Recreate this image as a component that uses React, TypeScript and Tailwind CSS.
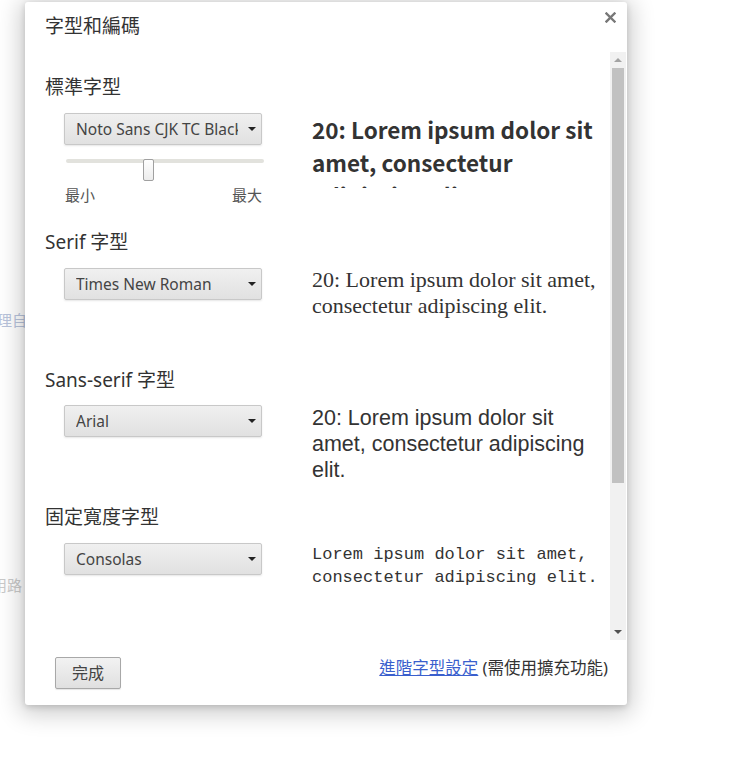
import React from "react";

const Select = ({ value }: { value: string }) => (
  <div className="flex h-[32px] w-[198px] items-center rounded-[2px] border border-[#c8c8c8] bg-gradient-to-b from-[#f0f0f0] to-[#e1e1e1] pl-[11px] pr-[5px] shadow-[0_1px_2px_rgba(0,0,0,0.1)]">
    <span className="flex-1 overflow-hidden whitespace-nowrap text-[15.5px] leading-[20px] text-[#444]">{value}</span>
    <span className="ml-[10px] h-0 w-0 border-x-[4px] border-t-[4px] border-x-transparent border-t-[#222]" />
  </div>
);

const Heading = ({ children, className = "" }: { children: React.ReactNode; className?: string }) => (
  <div className={`h-[24px] text-[19px] leading-[24px] text-[#333] ${className}`}>{children}</div>
);

const App = () => {
  return (
    <div className="relative h-[779px] w-[749px] overflow-hidden bg-white font-['Noto_Sans','Noto_Sans_CJK_TC',sans-serif]">
      {/* page behind the overlay */}
      <div className="flex flex-col pl-0 pt-[309px]">
        <span className="ml-[-3px] text-[15px] leading-[22px] text-[#b9c4dc]">理自</span>
        <span className="ml-[-8px] mt-[243px] text-[15px] leading-[22px] text-[#cacaca]">用路</span>
      </div>

      <div className="absolute left-[25px] top-[2px] flex h-[703px] w-[602px] flex-col rounded-[3px] bg-white shadow-[0_4px_23px_5px_rgba(0,0,0,0.2),0_2px_6px_rgba(0,0,0,0.15)]">
        {/* header */}
        <div className="relative h-[50px] shrink-0 pl-[20px] pt-[12px]">
          <div className="text-[19px] leading-[24px] text-[#333]">字型和編碼</div>
          <svg className="absolute right-[11px] top-[10px]" width="11" height="11" viewBox="0 0 11 11">
            <path d="M1.5 1.5 L9.5 9.5 M9.5 1.5 L1.5 9.5" stroke="#777" strokeWidth="2.4" strokeLinecap="square" />
          </svg>
        </div>

        {/* scrolling content */}
        <div className="flex min-h-0 flex-1 pr-[1px]">
          <div className="flex-1 overflow-hidden pl-[20px] pt-[23px]">
            <Heading>標準字型</Heading>
            <div className="mt-[14px] flex">
              <div className="ml-[19px] w-[198px]">
                <Select value="Noto Sans CJK TC Black" />
                <div className="relative mt-[14px] h-[22px]">
                  <div className="ml-[2px] mt-[9px] h-[4px] w-[198px] rounded-[2px] bg-[#e2e2dd]" />
                  <div className="absolute left-[79px] top-0 h-[22px] w-[11px] rounded-[2px] border border-[#a0a0a0] bg-gradient-to-b from-[#fefefe] to-[#ececec]" />
                </div>
                <div className="mt-[4px] flex justify-between pl-[1px] text-[15px] leading-[20px] text-[#555]">
                  <span>最小</span>
                  <span>最大</span>
                </div>
              </div>
              <div className="ml-[50px] h-[75px] w-[292px] overflow-hidden font-['Noto_Sans_CJK_TC',sans-serif] text-[22.5px] font-bold leading-[33px] text-[#333]">
                20: Lorem ipsum dolor sit amet, consectetur adipiscing elit.
              </div>
            </div>

            <Heading className="mt-[25px]">Serif 字型</Heading>
            <div className="mt-[14px] flex h-[100px]">
              <div className="ml-[19px] w-[198px]">
                <Select value="Times New Roman" />
              </div>
              <div className="ml-[50px] mt-[-1px] w-[292px] font-['Liberation_Serif',serif] text-[22px] leading-[26px] text-[#333]">
                20: Lorem ipsum dolor sit amet, consectetur adipiscing elit.
              </div>
            </div>

            <Heading>Sans-serif 字型</Heading>
            <div className="mt-[13px] flex h-[100px]">
              <div className="ml-[19px] w-[198px]">
                <Select value="Arial" />
              </div>
              <div className="ml-[50px] w-[292px] font-['Liberation_Sans',sans-serif] text-[21.5px] leading-[26px] text-[#333]">
                20: Lorem ipsum dolor sit amet, consectetur adipiscing elit.
              </div>
            </div>

            <Heading>固定寬度字型</Heading>
            <div className="mt-[14px] flex h-[100px]">
              <div className="ml-[19px] w-[198px]">
                <Select value="Consolas" />
              </div>
              <div className="ml-[50px] w-[292px] font-['Liberation_Mono',monospace] text-[17px] leading-[23px] text-[#333]">
                Lorem ipsum dolor sit amet, consectetur adipiscing elit.
              </div>
            </div>
          </div>

          {/* scrollbar */}
          <div className="flex w-[16px] flex-col items-center bg-[#f1f1f1]">
            <div className="mt-[6px] h-0 w-0 border-x-[4px] border-b-[4px] border-x-transparent border-b-[#a3a3a3]" />
            <div className="mt-[6px] h-[415px] w-[12px] bg-[#c1c1c1]" />
            <div className="flex-1" />
            <div className="mb-[6px] h-0 w-0 border-x-[4px] border-t-[4px] border-x-transparent border-t-[#505050]" />
          </div>
        </div>

        {/* footer */}
        <div className="flex h-[65px] shrink-0 items-center justify-between pl-[30px] pr-[19px]">
          <button className="h-[32px] w-[66px] rounded-[2px] border border-[#a8a8a8] bg-gradient-to-b from-[#f2f2f2] to-[#e0e0e0] text-[16px] text-[#444] shadow-[0_1px_1px_rgba(0,0,0,0.1)]">
            完成
          </button>
          <div className="mb-[10px] text-[16.5px] leading-[22px] text-[#333]">
            <a className="cursor-pointer text-[#3a5fcd] underline">進階字型設定</a> (需使用擴充功能)
          </div>
        </div>
      </div>
    </div>
  );
};

export default App;
